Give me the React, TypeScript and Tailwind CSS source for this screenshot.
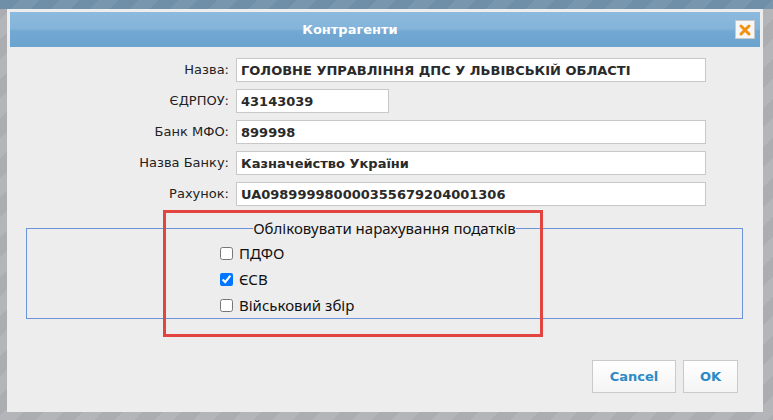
import { useState } from 'react'

const fields = [
  { label: 'Назва:', value: 'ГОЛОВНЕ УПРАВЛІННЯ ДПС У ЛЬВІВСЬКІЙ ОБЛАСТІ', short: false },
  { label: 'ЄДРПОУ:', value: '43143039', short: true },
  { label: 'Банк МФО:', value: '899998', short: false },
  { label: 'Назва Банку:', value: 'Казначейство України', short: false },
  { label: 'Рахунок:', value: 'UA098999980000355679204001306', short: false },
]

const taxes = [
  { id: 'pdfo', label: 'ПДФО', on: false },
  { id: 'esv', label: 'ЄСВ', on: true },
  { id: 'military', label: 'Військовий збір', on: false },
]

function CloseIcon() {
  return (
    <svg width="12" height="12" viewBox="0 0 12 12">
      <path d="M2 2 L10 10 M10 2 L2 10" stroke="#f29111" strokeWidth="3" strokeLinecap="round" />
    </svg>
  )
}

export default function App() {
  const [checked, setChecked] = useState<Record<string, boolean>>(
    Object.fromEntries(taxes.map((t) => [t.id, t.on])),
  )

  return (
    <div className="relative w-[773px] h-[420px] overflow-hidden bg-[repeating-linear-gradient(135deg,#abadb1_0px,#abadb1_14px,#b3b5b9_14px,#b3b5b9_28px)] font-['DejaVu_Sans',sans-serif]">
      <div className="h-[9px] bg-[repeating-linear-gradient(135deg,#6f8ea8_0px,#6f8ea8_14px,#7896ae_14px,#7896ae_28px)]" />

      <div className="ml-[7px] w-[756px] h-[403px] bg-[#ededed] p-[3px] flex flex-col">
        {/* title bar */}
        <div className="relative h-[35px] flex items-center justify-center pr-[70px] bg-[linear-gradient(to_bottom,#8dbade_0%,#84b4da_48%,#72a9d3_54%,#6aa3cf_100%)]">
          <span className="text-[13px] font-bold text-white">Контрагенти</span>
          <button className="absolute right-[5px] top-[8px] w-[20px] h-[19px] flex items-center justify-center bg-[#f7f7f7] border border-[#c9c9c9]">
            <CloseIcon />
          </button>
        </div>

        {/* fields */}
        <div className="mt-[11px] flex flex-col gap-[7px]">
          {fields.map((f) => (
            <div key={f.label} className="flex items-center gap-[7px]">
              <label className="w-[219px] text-right text-[13px] text-[#222]">{f.label}</label>
              <input
                defaultValue={f.value}
                className={`${f.short ? 'w-[153px]' : 'w-[470px]'} h-[24px] bg-white border border-[#c8c8c8] px-[4px] text-[13px] font-bold text-[#2a2a2a] outline-none`}
              />
            </div>
          ))}
        </div>

        {/* tax accounting */}
        <fieldset className="mt-[12px] ml-[16px] mr-[17px] h-[101px] border border-[#6a93d8] font-['Noto_Sans',sans-serif]">
          <legend className="mx-auto px-0 text-[15px] leading-[20px] text-[#111]">
            Обліковувати нарахування податків
          </legend>
          <div className="pl-[193px] pt-[5px] flex flex-col gap-[6px]">
            {taxes.map((t) => (
              <label key={t.id} className="flex items-center gap-[6px] h-[20px] text-[15px] text-[#111]">
                <input
                  type="checkbox"
                  checked={checked[t.id]}
                  onChange={(e) => setChecked({ ...checked, [t.id]: e.target.checked })}
                  className="w-[13px] h-[13px] m-0"
                />
                {t.label}
              </label>
            ))}
          </div>
        </fieldset>

        {/* actions */}
        <div className="mt-auto mb-[16px] mr-[22px] flex justify-end gap-[7px]">
          <button className="w-[84px] h-[33px] border border-[#cacaca] bg-[linear-gradient(to_bottom,#ffffff,#f4f4f4)] text-[13px] font-bold text-[#2d8ac6]">
            Cancel
          </button>
          <button className="w-[55px] h-[33px] border border-[#cacaca] bg-[linear-gradient(to_bottom,#ffffff,#f4f4f4)] text-[13px] font-bold text-[#2d8ac6]">
            OK
          </button>
        </div>
      </div>

      {/* highlight frame */}
      <div className="absolute left-[163px] top-[210px] w-[380px] h-[127px] border-[3px] border-[#e2453f] pointer-events-none" />
    </div>
  )
}
